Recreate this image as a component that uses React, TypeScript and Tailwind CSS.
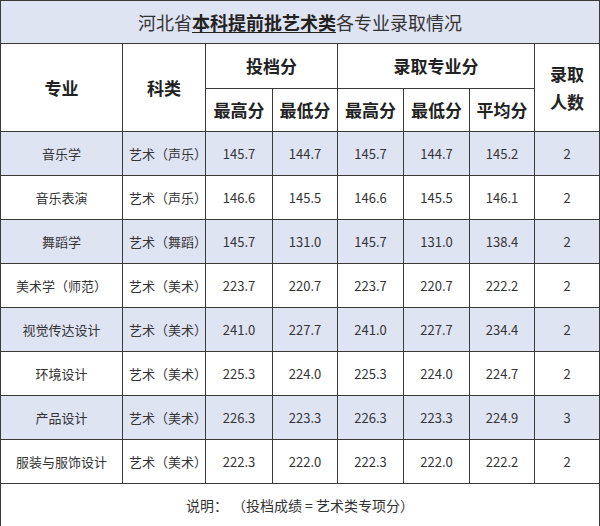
import React from "react"

// 河北省本科提前批艺术类录取表
const rows = [
  { major: "音乐学", kind: "艺术（声乐）", v: ["145.7", "144.7", "145.7", "144.7", "145.2"], n: "2" },
  { major: "音乐表演", kind: "艺术（声乐）", v: ["146.6", "145.5", "146.6", "145.5", "146.1"], n: "2" },
  { major: "舞蹈学", kind: "艺术（舞蹈）", v: ["145.7", "131.0", "145.7", "131.0", "138.4"], n: "2" },
  { major: "美术学（师范）", kind: "艺术（美术）", v: ["223.7", "220.7", "223.7", "220.7", "222.2"], n: "2" },
  { major: "视觉传达设计", kind: "艺术（美术）", v: ["241.0", "227.7", "241.0", "227.7", "234.4"], n: "2" },
  { major: "环境设计", kind: "艺术（美术）", v: ["225.3", "224.0", "225.3", "224.0", "224.7"], n: "2" },
  { major: "产品设计", kind: "艺术（美术）", v: ["226.3", "223.3", "226.3", "223.3", "224.9"], n: "3" },
  { major: "服装与服饰设计", kind: "艺术（美术）", v: ["222.3", "222.0", "222.3", "222.0", "222.2"], n: "2" },
]

const cell = "border border-[#3a3a3a] p-0"
const head = `${cell} text-[17px] font-bold text-[#222] text-center`

export default function App() {
  return (
    <div className="w-[600px] h-[526px] bg-white font-['Noto_Sans_CJK_SC','Noto_Sans',sans-serif] text-[#333]">
      <table className="w-[599px] table-fixed border-collapse">
        <colgroup>
          <col className="w-[122px]" />
          <col className="w-[83px]" />
          <col className="w-[67px]" />
          <col className="w-[65px]" />
          <col className="w-[66px]" />
          <col className="w-[66px]" />
          <col className="w-[65px]" />
          <col className="w-[65px]" />
        </colgroup>
        <tbody>
          <tr className="h-[43px] bg-[#dfe4f3]">
            <td colSpan={8} className={`${cell} text-center text-[18px] text-[#333]`}>
              河北省<span className="font-bold underline underline-offset-2 text-[#222]">本科提前批艺术类</span>各专业录取情况
            </td>
          </tr>
          <tr className="h-[45px]">
            <td rowSpan={2} className={head}>专业</td>
            <td rowSpan={2} className={head}>科类</td>
            <td colSpan={2} className={head}>投档分</td>
            <td colSpan={3} className={head}>录取专业分</td>
            <td rowSpan={2} className={`${head} leading-[28px]`}>录取<br />人数</td>
          </tr>
          <tr className="h-[43px]">
            <td className={head}>最高分</td>
            <td className={head}>最低分</td>
            <td className={head}>最高分</td>
            <td className={head}>最低分</td>
            <td className={head}>平均分</td>
          </tr>
          {rows.map((r, i) => (
            <tr key={r.major} className={`h-[44px] text-[13px] ${i % 2 === 0 ? "bg-[#dfe4f3]" : "bg-white"}`}>
              <td className={`${cell} text-center`}>{r.major}</td>
              <td className={`${cell} pl-[6px] whitespace-nowrap`}>{r.kind}</td>
              {r.v.map((x, j) => (
                <td key={j} className={`${cell} text-center`}>{x}</td>
              ))}
              <td className={`${cell} text-center`}>{r.n}</td>
            </tr>
          ))}
          <tr className="h-[43px]">
            <td colSpan={8} className={`${cell} text-center text-[14px] [text-spacing-trim:space-all]`}>
              说明：<span className="ml-[4px]">（投档成绩 = 艺术类专项分）</span>
            </td>
          </tr>
        </tbody>
      </table>
    </div>
  )
}
